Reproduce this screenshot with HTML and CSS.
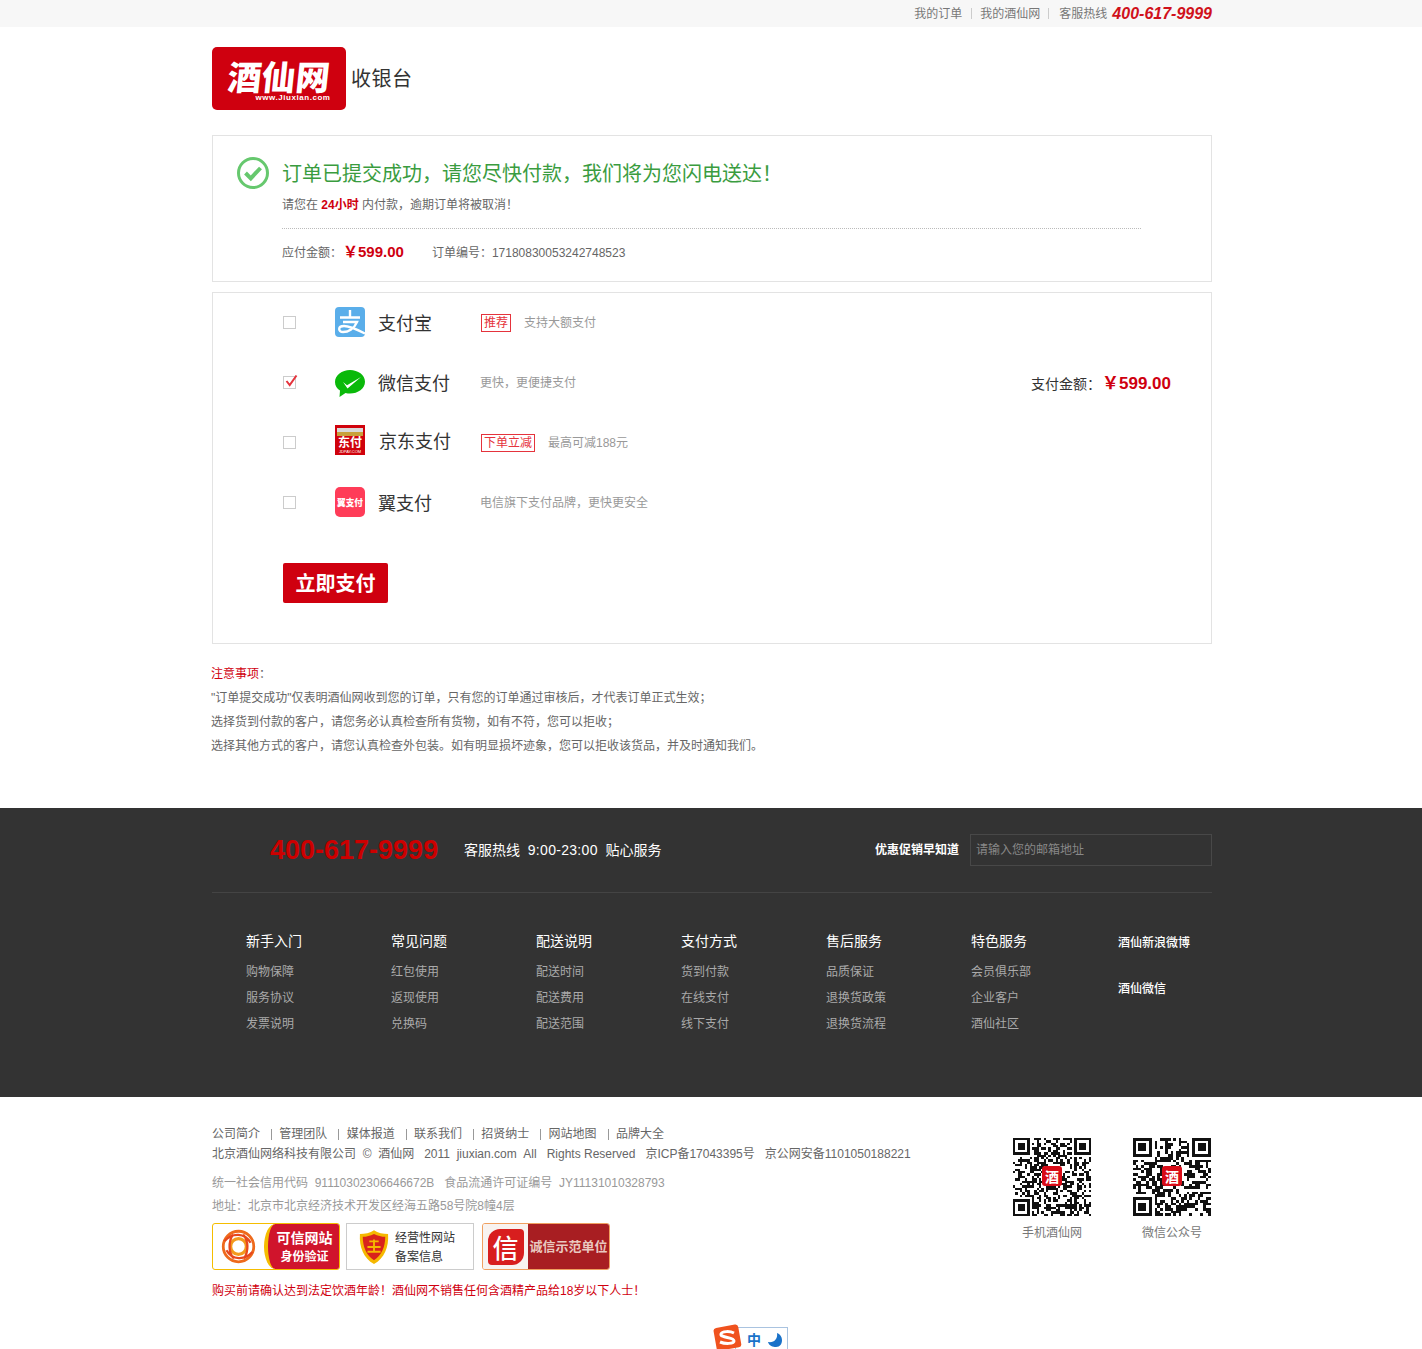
FILE: index.html
```html
<!DOCTYPE html>
<html lang="zh-CN">
<head>
<meta charset="utf-8">
<title>收银台 - 酒仙网</title>
<link rel="stylesheet" href="styles.css">
</head>
<body>
<div class="topbar">
  <div class="wrap topbar-in">
    <a>我的订单</a><i class="sep sep-first"></i><a>我的酒仙网</a><i class="sep sep-wide"></i><a>客服热线</a><b class="top-phone">400-617-9999</b>
  </div>
</div>

<header class="wrap head">
  <div class="logo"><span class="logo-cn">酒仙网</span><span class="logo-en">www.Jiuxian.com</span></div>
  <h1 class="head-title">收银台</h1>
</header>

<main class="wrap">
  <section class="box order">
    <svg class="ok-icon" viewBox="0 0 32 32" width="32" height="32"><circle cx="16" cy="16" r="14.5" fill="none" stroke="#66c86e" stroke-width="3"/><path d="M8.500 16l5.300 5.300L23.500 11" fill="none" stroke="#66c86e" stroke-width="4"/></svg>
    <div class="order-main">
      <h2 class="order-title">订单已提交成功，请您尽快付款，我们将为您闪电送达！</h2>
      <p class="order-sub">请您在 <b class="red">24小时</b> 内付款，逾期订单将被取消！</p>
      <div class="order-meta">
        <span>应付金额：<b class="order-price">￥599.00</b></span>
        <span class="order-no">订单编号：17180830053242748523</span>
      </div>
    </div>
  </section>

  <section class="box pay">
    <div class="pay-row">
      <span class="check"></span>
      <svg class="pay-icon" viewBox="0 0 30 30" width="30" height="30"><rect width="30" height="30" rx="4" fill="#5aaeea"/><path d="M15 3v8M5 10.500h20M8 15h14c-3 7-9 10-14 10-5 0-5.500-6 1-6 6 0 12 3 21 7.500" fill="none" stroke="#fff" stroke-width="2.400"/></svg>
      <span class="pay-name">支付宝</span>
      <span class="pay-desc"><em class="tag">推荐</em>支持大额支付</span>
    </div>
    <div class="pay-row">
      <span class="check checked"><svg viewBox="0 0 14 14" width="14" height="14"><path d="M2.500 7l3.200 4L12.500 1.500" fill="none" stroke="#e5333c" stroke-width="2"/></svg></span>
      <svg class="pay-icon" viewBox="0 0 30 30" width="30" height="30"><path d="M15 3C7 3 0 8 0 15c0 4 2 6.500 5 8.500L4.500 30l6-4c1.500.4 3 .6 4.500.6 8 0 15-5 15-11.800S23 3 15 3z" fill="#0ab90a"/><path d="M8 15l4 3.200L26 10 12.500 21.500z" fill="#fff"/></svg>
      <span class="pay-name">微信支付</span>
      <span class="pay-desc">更快，更便捷支付</span>
      <span class="pay-amount">支付金额：<b class="pay-price">￥599.00</b></span>
    </div>
    <div class="pay-row row-jd">
      <span class="check"></span>
      <svg class="pay-icon" viewBox="0 0 30 30" width="30" height="30"><rect width="30" height="30" fill="#d0020c"/><rect x="2" y="3" width="26" height="4" fill="#d9d9d9"/><rect x="2" y="7" width="26" height="4" fill="#c8a13c"/><text x="15" y="22" class="t-jd" text-anchor="middle">东付</text><text x="15" y="28" class="t-jd-en" text-anchor="middle">JDPAY.COM</text></svg>
      <span class="pay-name">京东支付</span>
      <span class="pay-desc"><em class="tag">下单立减</em>最高可减188元</span>
    </div>
    <div class="pay-row">
      <span class="check"></span>
      <svg class="pay-icon" viewBox="0 0 30 30" width="30" height="30"><rect width="30" height="30" rx="5" fill="#ff3c58"/><text x="15" y="18.500" class="t-yi" text-anchor="middle">翼支付</text></svg>
      <span class="pay-name">翼支付</span>
      <span class="pay-desc">电信旗下支付品牌，更快更安全</span>
    </div>
    <button class="pay-btn">立即支付</button>
  </section>

  <section class="notes">
    <p><span class="red">注意事项</span>：</p>
    <p>"订单提交成功"仅表明酒仙网收到您的订单，只有您的订单通过审核后，才代表订单正式生效；</p>
    <p>选择货到付款的客户，请您务必认真检查所有货物，如有不符，您可以拒收；</p>
    <p>选择其他方式的客户，请您认真检查外包装。如有明显损坏迹象，您可以拒收该货品，并及时通知我们。</p>
  </section>
</main>

<footer class="dark">
  <div class="wrap">
    <div class="dark-top">
      <b class="dark-phone">400-617-9999</b>
      <span class="dark-slogan">客服热线 &nbsp;<span class="dark-hours">9:00-23:00</span> &nbsp;贴心服务</span>
      <span class="dark-sub">优惠促销早知道</span>
      <input class="dark-input" placeholder="请输入您的邮箱地址">
    </div>
    <div class="dark-cols">
      <div class="col"><h3>新手入门</h3><a>购物保障</a><a>服务协议</a><a>发票说明</a></div>
      <div class="col"><h3>常见问题</h3><a>红包使用</a><a>返现使用</a><a>兑换码</a></div>
      <div class="col"><h3>配送说明</h3><a>配送时间</a><a>配送费用</a><a>配送范围</a></div>
      <div class="col"><h3>支付方式</h3><a>货到付款</a><a>在线支付</a><a>线下支付</a></div>
      <div class="col"><h3>售后服务</h3><a>品质保证</a><a>退换货政策</a><a>退换货流程</a></div>
      <div class="col"><h3>特色服务</h3><a>会员俱乐部</a><a>企业客户</a><a>酒仙社区</a></div>
      <div class="col-side"><a>酒仙新浪微博</a><a>酒仙微信</a></div>
    </div>
  </div>
</footer>

<footer class="wrap legal">
  <div class="legal-main">
    <nav class="legal-nav"><a>公司简介</a><a>管理团队</a><a>媒体报道</a><a>联系我们</a><a>招贤纳士</a><a>网站地图</a><a>品牌大全</a></nav>
    <p class="legal-copy">北京酒仙网络科技有限公司 &nbsp;©&nbsp; 酒仙网 &nbsp; 2011 &nbsp;jiuxian.com &nbsp;All &nbsp;&nbsp;Rights Reserved &nbsp;&nbsp;京ICP备17043395号 &nbsp; 京公网安备1101050188221</p>
    <p class="legal-grey l3">统一社会信用代码 &nbsp;91110302306646672B &nbsp; 食品流通许可证编号 &nbsp;JY11131010328793</p>
    <p class="legal-grey l4">地址：北京市北京经济技术开发区经海五路58号院8幢4层</p>
    <div class="badges">
      <div class="badge b-trust">
        <svg viewBox="0 0 40 40" width="37" height="37"><g fill="none"><circle cx="20" cy="20" r="16.500" stroke="#ee6a1c" stroke-width="3"/><circle cx="20" cy="20" r="8.500" stroke="#f39a1d" stroke-width="3.500"/><path d="M5 14c8-9 22-9 28 2M35 26c-8 9-22 9-28-2M14 7C9 15 9 27 15 33M26 33c5-8 5-19-1-26" stroke-width="2.500" stroke="#e7471d"/></g></svg>
        <div class="b-trust-r"><b>可信网站</b><b class="small">身份验证</b></div>
      </div>
      <div class="badge b-rec">
        <svg viewBox="0 0 32 38" width="30" height="36"><path d="M16 1c4 3 10 4 15 4 1 14-4 26-15 32C5 31 0 19 1 5c5 0 11-1 15-4z" fill="#f5b800"/><path d="M16 5c4 2 8 3 12 3 0 11-4 20-12 25C8 28 4 19 4 8c4 0 8-1 12-3z" fill="#d9231c"/><path d="M9 19h14M9 24h14M16 11v14M11 13h10" stroke="#f5b800" stroke-width="2" fill="none"/></svg>
        <div class="b-rec-t"><span>经营性网站</span><span>备案信息</span></div>
      </div>
      <div class="badge b-hon">
        <div class="b-hon-l"><span class="b-hon-x">信</span></div>
        <div class="b-hon-r">诚信示范单位</div>
      </div>
    </div>
    <p class="legal-warn">购买前请确认达到法定饮酒年龄！酒仙网不销售任何含酒精产品给18岁以下人士！</p>
  </div>
  <div class="qrs">
    <figure class="qr"><div class="qr-img"><svg class="qr-svg" data-seed="7" viewBox="0 0 33 33" width="78" height="78" shape-rendering="crispEdges"></svg><span class="qr-mark">酒</span></div><figcaption>手机酒仙网</figcaption></figure>
    <figure class="qr"><div class="qr-img"><svg class="qr-svg" data-seed="23" viewBox="0 0 29 29" width="78" height="78" shape-rendering="crispEdges"></svg><span class="qr-mark">酒</span></div><figcaption>微信公众号</figcaption></figure>
  </div>
</footer>

<div class="ime">
  <svg class="ime-s" viewBox="0 0 30 28" width="30" height="28"><rect x="2" y="2" width="25" height="23" rx="3" fill="#f0521e" transform="rotate(-10 15 14)"/><path d="M21 9c-4-2-12-2-13 1-1 4 13 3 13 7 0 3-9 3-14 1" fill="none" stroke="#fff" stroke-width="3"/></svg>
  <span class="ime-zh">中</span>
  <svg class="ime-moon" viewBox="0 0 14 14" width="14" height="14"><path d="M9 0c1 6-3 10-9 9 1 4 5 5 8 5 4 0 6-3 6-7 0-3-2-6-5-7z" fill="#1a72c9"/></svg>
</div>
<script src="script.js"></script>
</body>
</html>
```
FILE: styles.css
```css
* { box-sizing: border-box; }
html, body { margin: 0; padding: 0; }
body {
  height: 1349px;
  overflow: hidden;
  position: relative;
  background: #fff;
  color: #666;
  font: 12px/1.5 "Liberation Sans", "Noto Sans CJK SC", sans-serif;
}
h1, h2, h3, p, figure { margin: 0; font-weight: normal; }
em { font-style: normal; }
.wrap { width: 1000px; margin-left: 212px; }
.red { color: #d0000f; }

.topbar { height: 27px; background: #f7f7f7; }
.topbar-in { display: flex; justify-content: flex-end; align-items: center; height: 27px; color: #777; }
.sep { width: 1px; height: 11px; background: #ccc; margin: 0 8px; }
.sep-first { margin-left: 9px; }
.sep-wide { margin: 0 10px 0 8px; }
.top-phone { font: italic bold 16px "Liberation Sans", sans-serif; color: #d0111b; margin-left: 5px; }

.head { display: flex; align-items: center; gap: 5px; padding-top: 20px; height: 108px; padding-bottom: 25px; }
.logo { width: 134px; height: 63px; border-radius: 5px; background: #cf000f; color: #fff; display: flex; flex-direction: column; align-items: center; }
.logo-cn { font: 900 34px/42px "Noto Sans CJK SC", sans-serif; margin-top: 8px; transform: skewX(-6deg); white-space: nowrap; }
.logo-en { font: bold 8px/10px "Liberation Sans", sans-serif; letter-spacing: .55px; margin: -4px 0 0 28px; }
.head-title { font-size: 20px; color: #333; line-height: 30px; letter-spacing: .5px; }

.box { border: 1px solid #e3e3e3; }
.order { height: 147px; padding: 21px 0 0 24px; display: flex; gap: 13px; }
.order-main { width: 859px; }
.order-title { font-size: 20px; line-height: 34px; color: #3a9c3f; }
.order-sub { line-height: 18px; margin-top: 5px; }
.order-sub b { font-weight: bold; }
.order-meta { border-top: 1px dotted #bbb; margin-top: 14px; padding-top: 11px; line-height: 24px; display: flex; align-items: center; gap: 28px; }
.order-price { font-size: 15px; color: #cf000f; margin-left: 1px; }
.order-no { color: #666; }

.pay { margin-top: 10px; height: 352px; padding-left: 70px; }
.pay-row { height: 60px; display: flex; align-items: center; padding-bottom: 2px; }
.check { width: 13px; height: 13px; border: 1px solid #ccc; margin-right: 39px; flex: none; position: relative; }
.checked svg { position: absolute; left: 0; top: -3px; }
.pay-icon { flex: none; margin-right: 13px; }
.row-jd .pay-icon { margin-bottom: 4px; }
.pay-name { width: 102px; font-size: 18px; color: #333; flex: none; margin-top: 4px; }
.row-jd .pay-name { margin-top: 1px; margin-left: 1px; width: 101px; }
.pay-desc { color: #999; flex: 1; margin-top: 1px; }
.tag { border: 1px solid #e5333c; color: #e5333c; padding: 0 2px; line-height: 16px; display: inline-block; margin: 0 13px 0 1px; }
.pay-amount { margin: 3px 40px 0 0; font-size: 14px; color: #333; }
.pay-price { font-size: 17px; color: #cf000f; margin-left: 1px; }
.pay-btn { display: block; margin-top: 30px; width: 105px; height: 40px; border: 0; border-radius: 2px; background: #cf000f; color: #fff; font: bold 20px "Noto Sans CJK SC", sans-serif; padding: 0 0 2px; }

.t-jd { font: bold 12px "Noto Sans CJK SC", sans-serif; fill: #fff; }
.t-jd-en { font: 4px "Liberation Sans", sans-serif; fill: #fff; }
.t-yi { font: 900 8.700px "Noto Sans CJK SC", sans-serif; fill: #fff; }

.notes { padding-top: 18px; line-height: 24px; height: 164px; margin-left: -1px; }

.dark { background: #333; height: 289px; }
.dark-top { height: 85px; border-bottom: 1px solid #444; display: flex; align-items: center; padding: 0 0 0 58px; margin-bottom: 36px; }
.dark-phone { font: bold 27px "Liberation Sans", sans-serif; color: #cc0000; width: 194px; }
.dark-slogan { font-size: 14px; color: #fff; width: 411px; }
.dark-hours { letter-spacing: .3px; }
.dark-sub { font-size: 12px; font-weight: bold; color: #fff; width: 95px; }
.dark-input { width: 242px; height: 32px; background: transparent; border: 1px solid #484848; padding: 0 5px; font: 12px "Liberation Sans", "Noto Sans CJK SC", sans-serif; color: #888; }
.dark-input::placeholder { color: #888; opacity: 1; }
.dark-cols { display: flex; padding-left: 34px; }
.col { width: 145px; display: flex; flex-direction: column; }
.col h3 { font-size: 14px; color: #fff; line-height: 24px; margin-bottom: 6px; }
.col a { color: #aaa; line-height: 26px; }
.col-side { padding: 3px 0 0 2px; display: flex; flex-direction: column; gap: 24px; color: #fff; }
.col-side a { line-height: 22px; font-weight: 500; }

.legal { position: relative; display: flex; justify-content: space-between; padding-top: 27px; }
.legal-nav { display: flex; line-height: 20px; }
.legal-nav a { padding-right: 12px; margin-right: 7.300px; position: relative; }
.legal-nav a:not(:last-child)::after { content: ""; position: absolute; right: 0; top: 5px; width: 1px; height: 11px; background: #999; }
.legal-copy { line-height: 20px; }
.legal-grey { color: #999; line-height: 24px; }
.l3 { margin-top: 7px; }
.l4 { margin-top: -1px; }
.badges { display: flex; margin-top: 5px; height: 47px; }
.badge { width: 128px; height: 47px; border-radius: 3px; overflow: hidden; flex: none; }
.b-trust { border: 1px solid #f5bd00; display: flex; align-items: center; padding-left: 7px; margin-right: 6px; background: #fff; gap: 7px; }
.b-trust-r { flex: 1; height: 45px; background: #d0142c; border-left: 4px solid #f5bd00; border-radius: 12px 0 0 12px / 24px 0 0 24px; color: #fff; display: flex; flex-direction: column; align-items: center; justify-content: center; font-size: 14px; line-height: 20px; padding-left: 2px; }
.b-trust-r .small { font-size: 12px; line-height: 18px; }
.b-rec { border: 1px solid #ccc; border-radius: 0; display: flex; align-items: center; padding-left: 12px; gap: 6px; margin-right: 8px; }
.b-rec-t { display: flex; flex-direction: column; color: #333; line-height: 19px; padding-top: 3px; }
.b-hon { border: 1px solid #f0a060; display: flex; }
.b-hon-l { width: 45px; background: #f8f3f0; display: flex; align-items: center; justify-content: center; }
.b-hon-x { background: #d81e1e; color: #fff; font: 500 26px/36px "Noto Sans CJK SC", sans-serif; width: 36px; text-align: center; border-radius: 12px 4px 12px 4px; }
.b-hon-r { flex: 1; background: #a81e22; color: #e9c9c0; font-size: 13px; font-weight: bold; line-height: 45px; text-align: center; white-space: nowrap; }
.legal-warn { color: #d0000f; margin-top: 9px; line-height: 24px; }

.qrs { display: flex; gap: 42px; padding-top: 14px; margin-right: 1px; }
.qr { width: 78px; text-align: center; }
.qr-img { width: 78px; height: 78px; position: relative; }
.qr-svg { display: block; }
.qr-mark { position: absolute; left: 29px; top: 28px; width: 20px; height: 20px; background: #d80c18; border-radius: 3px; color: #fff; font: bold 14px/20px "Noto Sans CJK SC", sans-serif; }
.qr figcaption { margin-top: 8px; line-height: 18px; color: #777; }

.ime { position: absolute; left: 735px; top: 1327px; width: 53px; height: 30px; border: 1px solid #a9c3e0; background: #fff; display: flex; align-items: flex-start; padding: 2px 0 0 11px; gap: 7px; }
.ime-s { position: absolute; left: -23px; top: -4px; }
.ime-zh { font: bold 14px/18px "Noto Sans CJK SC", sans-serif; color: #1a72c9; }
.ime-moon { margin-top: 3px; }
```
FILE: script.js
```js
// Fills each QR placeholder with finder patterns and seeded modules.
document.querySelectorAll('.qr-svg').forEach(function (svg) {
  var size = svg.viewBox.baseVal.width;
  var seed = Number(svg.dataset.seed);
  function rnd() {
    seed = (seed * 1664525 + 1013904223) % 4294967296;
    return seed / 4294967296;
  }
  function inFinder(x, y) {
    var near = function (v) { return v < 8; };
    var far = function (v) { return v >= size - 8; };
    return (near(x) && near(y)) || (far(x) && near(y)) || (near(x) && far(y));
  }
  var d = '';
  for (var y = 0; y < size; y++) {
    for (var x = 0; x < size; x++) {
      if (!inFinder(x, y) && rnd() > 0.5) d += 'M' + x + ' ' + y + 'h1v1h-1z';
    }
  }
  [[0, 0], [size - 7, 0], [0, size - 7]].forEach(function (p) {
    d += 'M' + p[0] + ' ' + p[1] + 'h7v7h-7zM' + (p[0] + 1) + ' ' + (p[1] + 1) + 'v5h5v-5z';
    d += 'M' + (p[0] + 2) + ' ' + (p[1] + 2) + 'h3v3h-3z';
  });
  var path = document.createElementNS('http://www.w3.org/2000/svg', 'path');
  path.setAttribute('d', d);
  path.setAttribute('fill', '#111');
  path.setAttribute('fill-rule', 'evenodd');
  svg.appendChild(path);
});
```
